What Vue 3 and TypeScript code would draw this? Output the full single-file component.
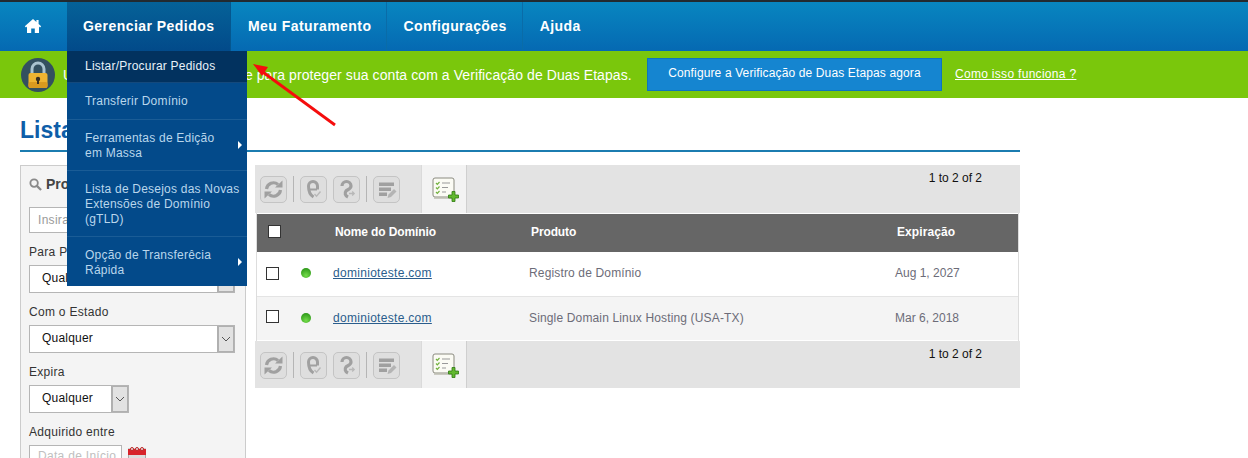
<script setup lang="ts">
interface Row { name: string; product: string; exp: string }
const rows: Row[] = [
  { name: 'dominioteste.com', product: 'Registro de Domínio', exp: 'Aug 1, 2027' },
  { name: 'dominioteste.com', product: 'Single Domain Linux Hosting (USA-TX)', exp: 'Mar 6, 2018' },
]
const toolbars = ['top', 'bottom']
const navItems = ['Meu Faturamento', 'Configurações', 'Ajuda']
</script>

<template>
  <div class="page">
    <header class="nav">
      <a class="nav-item home">
        <svg width="18" height="16" viewBox="0 0 18 16"><path d="M9 1 L0.8 8.2 L2 9.4 L3 8.6 V15 H7.2 V10.4 H10.8 V15 H15 V8.6 L16 9.4 L17.2 8.2 L14.6 5.9 V2 H12.4 V4 Z" fill="#fff"/></svg>
      </a>
      <div class="nav-item active">
        Gerenciar Pedidos
        <ul class="menu">
          <li class="sel">Listar/Procurar Pedidos</li>
          <li>Transferir Domínio</li>
          <li class="sub">Ferramentas de Edição<br>em Massa</li>
          <li>Lista de Desejos das Novas<br>Extensões de Domínio<br>(gTLD)</li>
          <li class="sub last">Opção de Transferêcia<br>Rápida</li>
        </ul>
      </div>
      <a v-for="n in navItems" :key="n" class="nav-item">{{ n }}</a>
    </header>

    <div class="banner">
      <span class="lock">
        <svg width="24" height="28" viewBox="0 0 24 28">
          <path d="M6 13 V8 a6 6 0 0 1 12 0 V13" fill="none" stroke="#a9c3cf" stroke-width="3"/>
          <rect x="2.500" y="12" width="19" height="15" rx="2" fill="#eeb431"/>
          <rect x="2.500" y="21" width="19" height="6" rx="2" fill="#d99a1f"/>
          <circle cx="12" cy="18" r="2.200" fill="#3a3020"/>
          <rect x="11" y="18" width="2" height="5" fill="#3a3020"/>
        </svg>
      </span>
      <span class="banner-text">Use seu celular como chave e para proteger sua conta com a Verificação de Duas Etapas.</span>
      <a class="banner-btn">Configure a Verificação de Duas Etapas agora</a>
      <a class="banner-link">Como isso funciona ?</a>
    </div>

    <div class="content">
      <h1 class="title">Lista de Pedidos</h1>
      <div class="columns">
        <aside class="side">
          <div class="side-head">
            <svg width="13" height="13" viewBox="0 0 14 14"><circle cx="5.500" cy="5.500" r="4" fill="none" stroke="#8a8a8a" stroke-width="2"/><path d="M8.500 8.500 L13 13" stroke="#8a8a8a" stroke-width="2.400"/></svg>
            <b>Procurar</b>
          </div>
          <div class="input wide">Insira</div>
          <label>Para Produto</label>
          <div class="select wide"><span>Qualquer</span><i><svg width="10" height="6" viewBox="0 0 10 6"><path d="M1 1 L5 5 L9 1" fill="none" stroke="#555"/></svg></i></div>
          <label>Com o Estado</label>
          <div class="select wide"><span>Qualquer</span><i><svg width="10" height="6" viewBox="0 0 10 6"><path d="M1 1 L5 5 L9 1" fill="none" stroke="#555"/></svg></i></div>
          <label>Expira</label>
          <div class="select narrow"><span>Qualquer</span><i><svg width="10" height="6" viewBox="0 0 10 6"><path d="M1 1 L5 5 L9 1" fill="none" stroke="#555"/></svg></i></div>
          <label>Adquirido entre</label>
          <div class="date-row">
            <div class="input date">Data de Início</div>
            <svg class="cal" width="18" height="18" viewBox="0 0 18 18">
              <rect x="0.500" y="2" width="17" height="15" fill="#ddd" stroke="#aaa"/>
              <rect x="0" y="2" width="18" height="6" fill="#d8232a"/>
              <circle cx="4" cy="2" r="1.500" fill="#eee" stroke="#b22"/><circle cx="9" cy="2" r="1.500" fill="#eee" stroke="#b22"/><circle cx="14" cy="2" r="1.500" fill="#eee" stroke="#b22"/>
            </svg>
          </div>
        </aside>

        <main class="main">
          <template v-for="(t, ti) in toolbars" :key="t">
            <div class="toolbar" :class="t">
              <span class="tool">
                <svg width="23" height="23" viewBox="0 0 23 23">
                  <path d="M4.500 11 a7 7 0 0 1 11.500 -4.500" fill="none" stroke="#a0a0a0" stroke-width="3.200"/>
                  <path d="M13 9.500 H20.500 V2.500 Z" fill="#a0a0a0"/>
                  <path d="M18.500 12 a7 7 0 0 1 -11.500 4.500" fill="none" stroke="#a0a0a0" stroke-width="3.200"/>
                  <path d="M10 13.500 H2.500 V20.500 Z" fill="#a0a0a0"/>
                </svg>
              </span>
              <span class="sep"></span>
              <span class="tool">
                <svg width="23" height="23" viewBox="0 0 23 23">
                  <path d="M15.500 11.500 V8 a4.500 4.500 0 0 0 -9 0 c0 5 1.500 9 5 11" fill="none" stroke="#a0a0a0" stroke-width="3"/>
                  <path d="M7 11.500 h8" stroke="#a0a0a0" stroke-width="2"/>
                  <path d="M12.500 16 l2 2.200 l4 -4.700" fill="none" stroke="#b8b8b8" stroke-width="1.400"/>
                </svg>
              </span>
              <span class="tool">
                <svg width="23" height="23" viewBox="0 0 23 23">
                  <path d="M7 8 a4.500 4.500 0 0 1 9 0 c0 3 -3.500 3.500 -5 5 c-1.500 2 -1 4.500 2 6" fill="none" stroke="#a0a0a0" stroke-width="3.200"/>
                  <path d="M14 15.500 h5 m-1.800 -2 l2 2 l-2 2" fill="none" stroke="#b8b8b8" stroke-width="1.300"/>
                </svg>
              </span>
              <span class="sep"></span>
              <span class="tool">
                <svg width="23" height="23" viewBox="0 0 23 23">
                  <path d="M4 4.500 h15 v3.500 H4 z M4 9.500 h12 v3.500 H4 z M4 14.500 h8 v3.500 H4 z" fill="#a0a0a0"/>
                  <path d="M12.500 20 l1 -3.500 l5.500 -5.500 l2.500 2.500 l-5.500 5.500 z" fill="#b4b4b4"/>
                </svg>
              </span>
              <span class="add">
                <svg width="28" height="26" viewBox="0 0 28 26">
                  <rect x="1" y="1" width="21" height="19" rx="2" fill="#fbfbf4" stroke="#8b8b80"/>
                  <path d="M2 21 h20" stroke="#bcbcb0" stroke-width="1.500"/>
                  <path d="M4 6 l1.300 1.300 L7.500 5 M4 10.500 l1.300 1.300 L7.500 9.500 M4 15 l1.300 1.300 L7.500 14" fill="none" stroke="#72b13e" stroke-width="1.200"/>
                  <path d="M10 6 h8 M10 10.500 h6 M10 15 h4" stroke="#999" stroke-width="1"/>
                  <path d="M20 14.500 h3 v3.500 h3.500 v3 h-3.500 v3.500 h-3 v-3.500 h-3.500 v-3 h3.500 z" fill="#62b82f" stroke="#2d7a10" stroke-width="0.800"/>
                </svg>
              </span>
              <span class="pager">1 to 2 of 2</span>
            </div>

            <div v-if="ti === 0" class="table">
              <div class="thead">
                <span class="box head-box"></span>
                <span class="c-name th">Nome do Domínio</span>
                <span class="c-prod th">Produto</span>
                <span class="c-exp th">Expiração</span>
              </div>
              <div v-for="(r, i) in rows" :key="i" class="row" :class="{ alt: i === 1 }">
                <span class="box"></span>
                <span class="dot"></span>
                <a class="domain">{{ r.name }}</a>
                <span class="prod">{{ r.product }}</span>
                <span class="exp">{{ r.exp }}</span>
              </div>
            </div>
          </template>
        </main>
      </div>
    </div>

    <svg class="arrow" width="90" height="70" viewBox="0 0 90 70">
      <path d="M85 65 L10 10" stroke="#f50d0d" stroke-width="2.800"/>
      <path d="M3 4 L18 7 L12 16 Z" fill="#f50d0d"/>
    </svg>
  </div>
</template>

<style>
html, body { margin: 0; background: #fff; overflow: hidden; }
</style>

<style scoped>
.page {
  position: relative;
  width: 1248px;
  height: 458px;
  overflow: hidden;
  font-family: "Liberation Sans", Arial, sans-serif;
  background: #fff;
}
.nav {
  display: flex;
  height: 49px;
  border-top: 2px solid #222a30;
  background: linear-gradient(#0886c0, #0569b2);
}
.nav-item {
  position: relative;
  display: flex;
  align-items: center;
  padding: 0 15px 2px 17px;
  color: #fff;
  font-size: 14px;
  font-weight: bold;
  letter-spacing: 0.45px;
  border-right: 1px solid #0a6ca8;
  white-space: nowrap;
}
.nav-item:nth-child(4) { letter-spacing: 0.4px; padding-left: 16px; }
.nav-item:last-child { border-right: 0; }
.home { width: 67px; box-sizing: border-box; padding: 0 2px 2px 0; justify-content: center; border-right: 0; }
.active {
  width: 164px;
  box-sizing: border-box;
  padding-left: 16px;
  background: linear-gradient(#056298, #024a8a);
  border-right: 1px solid #05578f;
}
.menu {
  position: absolute;
  z-index: 5;
  top: 49px;
  left: 0;
  width: 180px;
  margin: 0;
  padding: 0;
  list-style: none;
  background: #034a8a;
  font-size: 12px;
  font-weight: normal;
  letter-spacing: 0.22px;
  line-height: 15px;
  color: #b9d6ec;
}
.menu li {
  position: relative;
  padding: 11px 5px 9px 18px;
  border-bottom: 1px solid #1a5c96;
}
.menu li:nth-child(1) { padding-top: 8px; padding-bottom: 8px; }
.menu li:nth-child(2) { padding-top: 11px; padding-bottom: 10px; }
.menu li.sel { background: #02325f; color: #e8f1f8; border-bottom-color: #14497c; }
.menu li.last { border-bottom: 0; padding-bottom: 8px; }
.menu li.sub::after {
  content: "";
  position: absolute;
  right: 5px;
  top: 50%;
  margin-top: -4px;
  border-left: 4px solid #fff;
  border-top: 4px solid transparent;
  border-bottom: 4px solid transparent;
}
.banner {
  display: flex;
  align-items: center;
  height: 47px;
  padding-left: 21px;
  background: #7ac70c;
  color: #fff;
  font-size: 14px;
}
.lock {
  width: 34px;
  height: 34px;
  flex: none;
  border-radius: 50%;
  background: #33505f;
  display: flex;
  align-items: center;
  justify-content: center;
}
.banner-text {
  margin-left: 8px;
  width: 570px;
  white-space: nowrap;
  letter-spacing: 0.08px;
}
.banner-btn {
  box-sizing: border-box;
  width: 295px;
  height: 33px;
  margin-left: 14px;
  margin-top: -1px;
  background: #1585d0;
  border: 1px solid #0e74bd;
  font-size: 12px;
  letter-spacing: 0.13px;
  line-height: 29px;
  text-align: center;
  color: #fff;
}
.banner-link {
  margin-left: 13px;
  margin-top: -2px;
  font-size: 12px;
  letter-spacing: 0.3px;
  text-decoration: underline;
  color: #fff;
}
.content { width: 1000px; margin-left: 20px; }
.title {
  margin: 0;
  height: 54px;
  box-sizing: border-box;
  padding-top: 18px;
  border-bottom: 2px solid #1b7cb0;
  color: #0e5ea8;
  font-size: 23px;
  line-height: 28px;
  font-weight: bold;
  white-space: nowrap;
}
.columns { display: flex; margin-top: 13px; gap: 9px; align-items: flex-start; }
.side {
  box-sizing: border-box;
  width: 226px;
  flex: none;
  padding: 0 8px;
  background: #f4f4f4;
  border: 1px solid #ccc;
  color: #333;
  font-size: 12px;
  height: 320px;
}
.side-head {
  display: flex;
  align-items: center;
  gap: 4px;
  height: 41px;
  padding-bottom: 5px;
  box-sizing: border-box;
  font-size: 14px;
  color: #444;
  white-space: nowrap;
}
.input {
  box-sizing: border-box;
  height: 26px;
  line-height: 24px;
  background: #fff;
  border: 1px solid #b5b5b5;
  padding-left: 8px;
  color: #9a9a9a;
  letter-spacing: 0.3px;
}
.wide { width: 206px; }
label { display: block; margin: 12px 0 6px; line-height: 14px; letter-spacing: 0.3px; }
.select {
  box-sizing: border-box;
  display: flex;
  height: 28px;
  background: #fff;
  border: 1px solid #b5b5b5;
  color: #111;
  letter-spacing: 0.2px;
  line-height: 24px;
}
.select span { flex: 1; padding-left: 12px; }
.select i {
  box-sizing: border-box;
  width: 17px;
  border: 2px solid #b0b0b0;
  border-width: 1px 1px 1px 2px;
  background: #e2e2e2;
  display: flex;
  align-items: center;
  justify-content: center;
}
.narrow { width: 100px; }
.date-row { display: flex; gap: 6px; }
.date { width: 93px; padding-left: 8px; color: #c0c0c0; line-height: 20px; }
.cal { margin-top: 2px; }
.main { width: 765px; flex: none; }
.toolbar {
  position: relative;
  display: flex;
  height: 48px;
  align-items: flex-start;
  background: #e3e3e3;
  padding-left: 5px;
  box-sizing: border-box;
  padding-top: 11px;
}
.toolbar.bottom { height: 47px; }
.tool {
  box-sizing: border-box;
  width: 27px;
  height: 27px;
  border: 1px solid #c4c4c4;
  border-radius: 5px;
  display: flex;
  align-items: center;
  justify-content: center;
  background: #dedede;
  margin-right: 6px;
}
.sep { width: 1px; height: 26px; background: #b5b5b5; margin: 0 6px 0 0; }
.add {
  position: relative;
  margin: -11px 0 0 15px;
  width: 46px;
  height: 48px;
  box-sizing: border-box;
  background: #f3f3f3;
  border-left: 1px solid #dadada;
  border-right: 1px solid #cfcfcf;
  padding: 12px 0 0 10px;
}
.toolbar.bottom .add { height: 47px; }
.pager {
  position: absolute;
  top: 5px;
  right: 38px;
  font-size: 12px;
  color: #111;
  line-height: 16px;
}
.table {
  position: relative;
  width: 763px;
  margin-left: 1px;
  background: #fff;
  border-right: 1px solid #ddd;
  border-left: 1px solid #ddd;
  box-sizing: border-box;
}
.thead, .row { display: flex; align-items: center; }
.thead {
  position: relative;
  height: 39px;
  padding-bottom: 3px;
  background: #666;
  color: #fff;
  border-top: 1px solid #fff;
  box-sizing: border-box;
  font-size: 12px;
  font-weight: bold;
}
.box {
  box-sizing: border-box;
  width: 13px;
  height: 13px;
  flex: none;
  background: #fff;
  border: 1px solid #333;
}
.head-box { margin-left: 11px; }
.th { position: absolute; letter-spacing: -0.12px; }
.c-name { left: 78px; }
.c-prod { left: 274px; }
.c-exp { left: 640px; letter-spacing: 0.08px; }
.row {
  position: relative;
  height: 45px;
  padding-bottom: 2px;
  box-sizing: border-box;
  border-bottom: 1px solid #e4e4e4;
  font-size: 12px;
  letter-spacing: 0.15px;
  color: #6c6c78;
  padding-left: 9px;
}
.row.alt { background: #f4f4f4; height: 44px; border-bottom-color: #fff; }
.row.alt .box { margin-top: -2px; }
.dot {
  width: 10px;
  height: 10px;
  margin-left: 22px;
  border-radius: 50%;
  background: radial-gradient(circle at 50% 75%, #74dc4a, #2f9a1a 80%);
}
.domain { margin-left: 22px; color: #2a5d8c; text-decoration: underline; letter-spacing: 0.3px; }
.prod { position: absolute; left: 272px; }
.exp { position: absolute; left: 638px; letter-spacing: 0; }
.arrow { position: absolute; left: 250px; top: 60px; z-index: 6; }
</style>
